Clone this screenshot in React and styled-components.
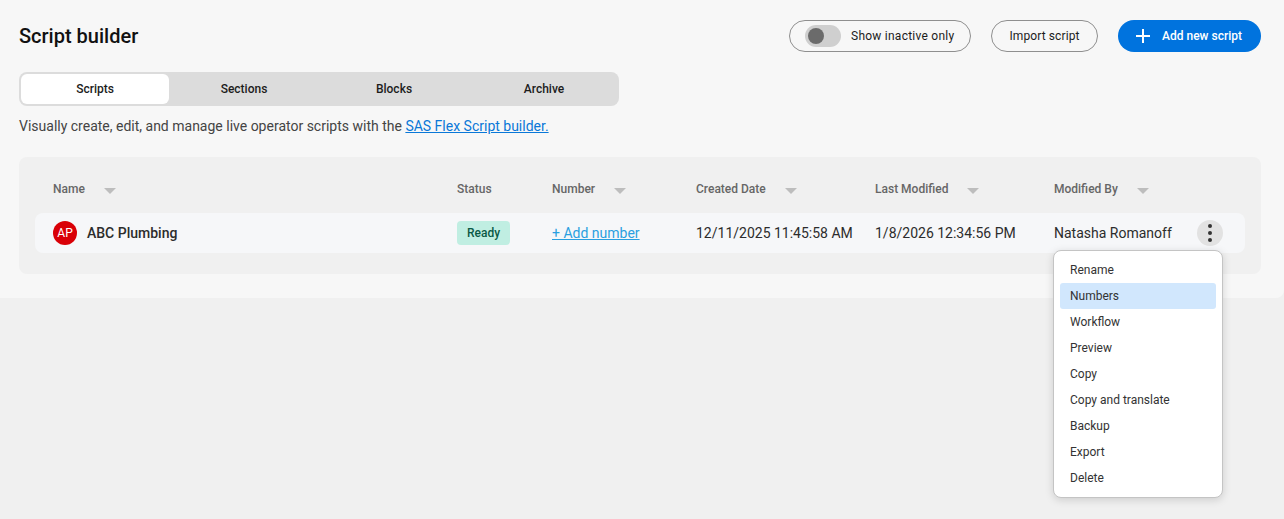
import React from "react";
import styled, { createGlobalStyle } from "styled-components";

const GlobalStyle = createGlobalStyle`
  html, body {
    margin: 0;
    height: 100%;
    background: #f0f0f0;
    font-family: Roboto, "Liberation Sans", sans-serif;
  }
  * { box-sizing: border-box; }
`;

const Page = styled.div`
  height: 298px;
  background: #f7f7f7;
  padding: 20px 23px 0 19px;
  border-bottom-right-radius: 8px;
`;

const TopBar = styled.div`
  display: flex;
  align-items: center;
  justify-content: space-between;
  height: 32px;
`;

const Title = styled.h1`
  margin: 0;
  font-size: 20px;
  font-weight: 500;
  color: #111;
`;

const Actions = styled.div`
  display: flex;
  align-items: center;
  gap: 20px;
`;

const OutlineBox = styled.div`
  display: flex;
  align-items: center;
  height: 32px;
  border: 1px solid #8f8f8f;
  border-radius: 16px;
  font-size: 12px;
  color: #1c1c1c;
`;

const ToggleBox = styled(OutlineBox)`
  width: 182px;
  padding-left: 15px;
  gap: 10px;
  letter-spacing: 0.25px;
`;

const Track = styled.span`
  display: flex;
  align-items: center;
  width: 36px;
  height: 22px;
  padding-left: 3px;
  border-radius: 11px;
  background: #cfcfcf;
`;

const Knob = styled.span`
  width: 16px;
  height: 16px;
  border-radius: 50%;
  background: #6b6b6b;
`;

const ImportButton = styled(OutlineBox)`
  width: 107px;
  justify-content: center;
  letter-spacing: 0.1px;
`;

const AddButton = styled.div`
  display: flex;
  align-items: center;
  width: 143px;
  height: 32px;
  padding-left: 18px;
  gap: 12px;
  border-radius: 16px;
  background: #0073de;
  color: #fff;
  font-size: 12px;
  font-weight: 500;
`;

const Tabs = styled.div`
  display: flex;
  width: 600px;
  height: 34px;
  margin-top: 20px;
  padding: 2px 0 2px 2px;
  border-radius: 8px;
  background: #dcdcdc;
`;

const Tab = styled.div`
  flex: ${(p) => (p.$active ? "0 0 148px" : "1")};
  display: flex;
  align-items: center;
  justify-content: center;
  border-radius: 6px;
  font-size: 12px;
  font-weight: 500;
  color: #1c1c1c;
  background: ${(p) => (p.$active ? "#fff" : "transparent")};
`;

const Description = styled.p`
  margin: 11px 0 0;
  font-size: 14px;
  line-height: 18px;
  color: #444;
`;

const DocLink = styled.a`
  color: #0a78d8;
  text-decoration: underline;
`;

const Panel = styled.div`
  position: relative;
  height: 117px;
  margin-top: 22px;
  padding: 0 16px;
  border-radius: 8px;
  background: #f0f0f0;
`;

const columns = "404px 95px 144px 179px 179px 1fr";

const HeadRow = styled.div`
  display: grid;
  grid-template-columns: ${columns};
  align-items: center;
  height: 56px;
  padding: 8px 18px 0;
`;

const HeadCell = styled.div`
  display: flex;
  align-items: center;
  gap: 19px;
  font-size: 12px;
  font-weight: 500;
  color: #666;
`;

const Caret = styled.span`
  width: 0;
  height: 0;
  margin-top: 3px;
  border-left: 6px solid transparent;
  border-right: 6px solid transparent;
  border-top: 6px solid #bdbdbd;
`;

const Row = styled.div`
  display: grid;
  grid-template-columns: ${columns};
  align-items: center;
  height: 40px;
  padding: 0 18px;
  border-radius: 8px;
  background: #f6f7f9;
  font-size: 14px;
  color: #2c2c2c;
`;

const NameCell = styled.div`
  display: flex;
  align-items: center;
  gap: 10px;
  font-weight: 500;
`;

const Avatar = styled.span`
  display: flex;
  align-items: center;
  justify-content: center;
  width: 24px;
  height: 24px;
  border-radius: 50%;
  background: #d90007;
  color: #fff;
  font-size: 12px;
  font-weight: 400;
`;

const Badge = styled.span`
  display: inline-flex;
  align-items: center;
  justify-content: center;
  width: 53px;
  height: 24px;
  border-radius: 4px;
  background: #c0eee2;
  color: #0b5a46;
  font-size: 12px;
  font-weight: 500;
`;

const AddNumber = styled.a`
  color: #2a9fe0;
  text-decoration: underline;
`;

const LastCell = styled.div`
  display: flex;
  align-items: center;
  justify-content: space-between;
`;

const MoreButton = styled.span`
  display: flex;
  flex-direction: column;
  align-items: center;
  justify-content: center;
  gap: 3px;
  width: 26px;
  height: 26px;
  margin-right: 4px;
  border-radius: 50%;
  background: #e2e2e2;
`;

const Dot = styled.span`
  width: 4px;
  height: 4px;
  border-radius: 50%;
  background: #333;
`;

const Menu = styled.ul`
  position: absolute;
  top: 93px;
  right: 38px;
  width: 170px;
  margin: 0;
  padding: 6px;
  list-style: none;
  border: 1px solid #c4c4c4;
  border-radius: 8px;
  background: #fff;
  box-shadow: 0 2px 8px rgba(0, 0, 0, 0.15);
`;

const MenuItem = styled.li`
  display: flex;
  align-items: center;
  height: 26px;
  padding-left: 10px;
  border-radius: 3px;
  font-size: 12px;
  color: #333;
  background: ${(p) => (p.$active ? "#d1e7fd" : "transparent")};
`;

const headers = [
  { label: "Name", sort: true },
  { label: "Status" },
  { label: "Number", sort: true },
  { label: "Created Date", sort: true },
  { label: "Last Modified", sort: true },
  { label: "Modified By", sort: true },
];

const menuItems = [
  "Rename",
  "Numbers",
  "Workflow",
  "Preview",
  "Copy",
  "Copy and translate",
  "Backup",
  "Export",
  "Delete",
];

export default function App() {
  return (
    <>
      <GlobalStyle />
      <Page>
        <TopBar>
          <Title>Script builder</Title>
          <Actions>
            <ToggleBox>
              <Track>
                <Knob />
              </Track>
              Show inactive only
            </ToggleBox>
            <ImportButton>Import script</ImportButton>
            <AddButton>
              <svg width="14" height="14" viewBox="0 0 14 14">
                <path d="M7 0v14M0 7h14" stroke="#fff" strokeWidth="2" />
              </svg>
              Add new script
            </AddButton>
          </Actions>
        </TopBar>
        <Tabs>
          <Tab $active>Scripts</Tab>
          <Tab>Sections</Tab>
          <Tab>Blocks</Tab>
          <Tab>Archive</Tab>
        </Tabs>
        <Description>
          Visually create, edit, and manage live operator scripts with the{" "}
          <DocLink href="#">SAS Flex Script builder.</DocLink>
        </Description>
        <Panel>
          <HeadRow>
            {headers.map((h) => (
              <HeadCell key={h.label}>
                {h.label}
                {h.sort && <Caret />}
              </HeadCell>
            ))}
          </HeadRow>
          <Row>
            <NameCell>
              <Avatar>AP</Avatar>
              ABC Plumbing
            </NameCell>
            <div>
              <Badge>Ready</Badge>
            </div>
            <div>
              <AddNumber href="#">+ Add number</AddNumber>
            </div>
            <div>12/11/2025 11:45:58 AM</div>
            <div>1/8/2026 12:34:56 PM</div>
            <LastCell>
              Natasha Romanoff
              <MoreButton>
                <Dot />
                <Dot />
                <Dot />
              </MoreButton>
            </LastCell>
          </Row>
          <Menu>
            {menuItems.map((item) => (
              <MenuItem key={item} $active={item === "Numbers"}>
                {item}
              </MenuItem>
            ))}
          </Menu>
        </Panel>
      </Page>
    </>
  );
}
